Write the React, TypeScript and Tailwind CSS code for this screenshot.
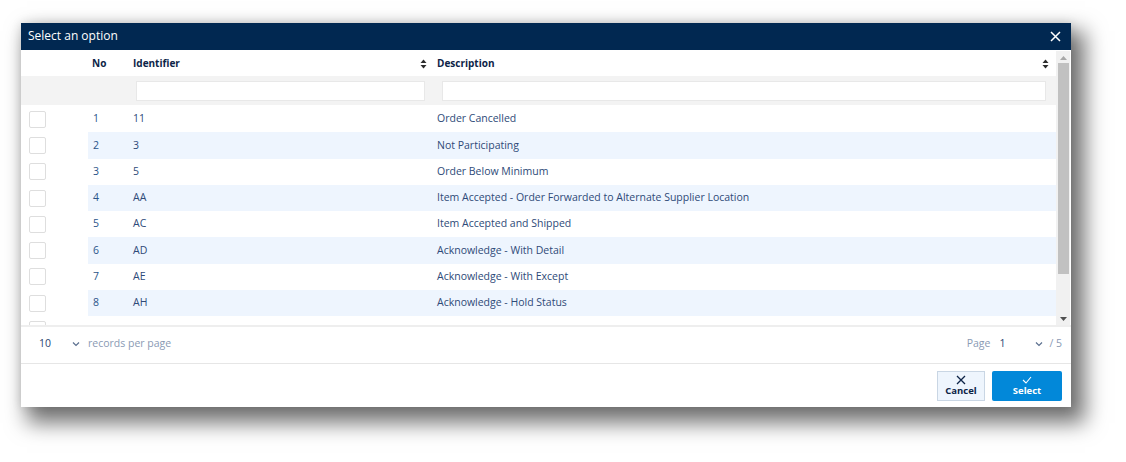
import React from "react";

const rows = [
  ["1", "11", "Order Cancelled"],
  ["2", "3", "Not Participating"],
  ["3", "5", "Order Below Minimum"],
  ["4", "AA", "Item Accepted - Order Forwarded to Alternate Supplier Location"],
  ["5", "AC", "Item Accepted and Shipped"],
  ["6", "AD", "Acknowledge - With Detail"],
  ["7", "AE", "Acknowledge - With Except"],
  ["8", "AH", "Acknowledge - Hold Status"],
  ["9", "AK", "Acknowledge - No Detail or Change"],
  ["10", "AR", "Acknowledge - Rejected"],
];

function SortIcon() {
  return (
    <svg width="7" height="10" viewBox="0 0 7 10" className="shrink-0">
      <path d="M3.5 0.5 L6.5 4 H0.5 Z" fill="#2b2b2b" />
      <path d="M3.5 9.5 L6.5 6 H0.5 Z" fill="#2b2b2b" />
    </svg>
  );
}

function Chevron() {
  return (
    <svg width="8" height="6" viewBox="0 0 8 6" className="shrink-0">
      <path d="M1 1.5 L4 4.5 L7 1.5" stroke="#5b6f8f" strokeWidth="1.2" fill="none" />
    </svg>
  );
}

export default function App() {
  return (
    <div className="w-[1126px] h-[462px] bg-white pt-[23px] pl-[21px] font-['Open_Sans',sans-serif]">
      <div className="w-[1050px] h-[384px] bg-white flex flex-col shadow-[10px_12px_20px_4px_rgba(0,0,0,0.55),0_0_10px_rgba(0,0,0,0.12)]">
        {/* Title bar */}
        <div className="h-[27px] bg-[#012851] flex items-center justify-between pl-[7px] pr-[10px] pb-[2px] shrink-0">
          <span className="text-white text-[12px] leading-none">Select an option</span>
          <svg width="11" height="11" viewBox="0 0 11 11" className="mt-[2px]">
            <path d="M1 1 L10 10 M10 1 L1 10" stroke="white" strokeWidth="1.5" />
          </svg>
        </div>

        {/* Table area */}
        <div className="h-[275px] flex shrink-0 overflow-hidden">
          <div className="flex-1 flex flex-col overflow-hidden">
            {/* header row */}
            <div className="h-[26px] pt-[1px] flex items-center shrink-0 text-[10px] font-bold text-[#0d2447]">
              <div className="w-[67px]" />
              <div className="w-[40px] pl-[4px]">No</div>
              <div className="w-[304px] pl-[5px] pr-[5px] flex items-center justify-between">
                <span>Identifier</span>
                <SortIcon />
              </div>
              <div className="flex-1 pl-[5px] pr-[7px] flex items-center justify-between">
                <span>Description</span>
                <SortIcon />
              </div>
            </div>
            {/* filter row */}
            <div className="h-[29px] bg-[#f3f3f3] flex items-center shrink-0">
              <div className="w-[115px]" />
              <div className="w-[289px] h-[20px] bg-white border border-[#e8e8e8]" />
              <div className="w-[17px]" />
              <div className="w-[604px] h-[20px] bg-white border border-[#e8e8e8]" />
            </div>
            {/* body rows */}
            <div className="flex flex-col mt-[1px]">
              {rows.map((r, i) => (
                <div key={r[0]} className="h-[26.3px] flex items-center shrink-0 text-[10.5px]">
                  <div className="w-[67px] h-full flex items-center pl-[8px]">
                    <div className="w-[17px] h-[17px] border border-[#dedede] bg-white rounded-[2px]" />
                  </div>
                  <div className={`flex-1 h-full flex items-center ${i % 2 === 1 ? "bg-[#eef5fe]" : "bg-white"}`}>
                    <div className="w-[40px] pl-[5px] text-[#2b5489]">{r[0]}</div>
                    <div className="w-[304px] pl-[5px] text-[#2e4a78]">{r[1]}</div>
                    <div className="flex-1 pl-[5px] text-[#2e4a78]">{r[2]}</div>
                  </div>
                </div>
              ))}
            </div>
          </div>
          {/* scrollbar */}
          <div className="w-[14px] bg-[#f1f1f1] flex flex-col items-center pt-[5px] pb-[4px] mt-[1px] mr-[1px] shrink-0">
            <svg width="7" height="4" viewBox="0 0 7 4">
              <path d="M3.5 0 L7 4 H0 Z" fill="#a8a8a8" />
            </svg>
            <div className="w-[11px] h-[211px] bg-[#c1c1c1] mt-[3px]" />
            <div className="flex-1" />
            <svg width="7" height="4" viewBox="0 0 7 4">
              <path d="M0 0 H7 L3.5 4 Z" fill="#505050" />
            </svg>
          </div>
        </div>

        {/* pagination */}
        <div className="h-[39px] pb-[2px] border-t-2 border-[#eeeeee] border-b border-b-[#e6e6e6] flex items-center shrink-0 text-[10.5px]">
          <span className="ml-[18px] text-[#2b4470] w-[33px] shrink-0">10</span>
          <Chevron />
          <span className="ml-[8px] text-[#8a9ab4]">records per page</span>
          <div className="flex-1" />
          <span className="text-[#8a9ab4]">Page</span>
          <span className="ml-[9px] text-[#2b4470] w-[36px] shrink-0">1</span>
          <Chevron />
          <span className="ml-[6px] mr-[9px] text-[#8a9ab4]">/ 5</span>
        </div>

        {/* buttons */}
        <div className="flex-1 flex items-center justify-end gap-[7px] pr-[9px]">
          <div className="w-[48px] h-[30px] bg-[#eef5fd] border border-[#c9d6e4] flex flex-col items-center justify-center">
            <svg width="10" height="10" viewBox="0 0 10 10">
              <path d="M1 1 L9 9 M9 1 L1 9" stroke="#0d2447" strokeWidth="1.3" />
            </svg>
            <span className="text-[9.5px] font-bold text-[#0d2447] leading-none mt-[1px]">Cancel</span>
          </div>
          <div className="w-[70px] h-[30px] bg-[#0288d9] rounded-[2px] flex flex-col items-center justify-center">
            <svg width="10" height="8" viewBox="0 0 10 8">
              <path d="M1 4 L4 7 L9 1" stroke="white" strokeWidth="1.1" fill="none" />
            </svg>
            <span className="text-[9.5px] font-bold text-white leading-none mt-[2px]">Select</span>
          </div>
        </div>
      </div>
    </div>
  );
}
